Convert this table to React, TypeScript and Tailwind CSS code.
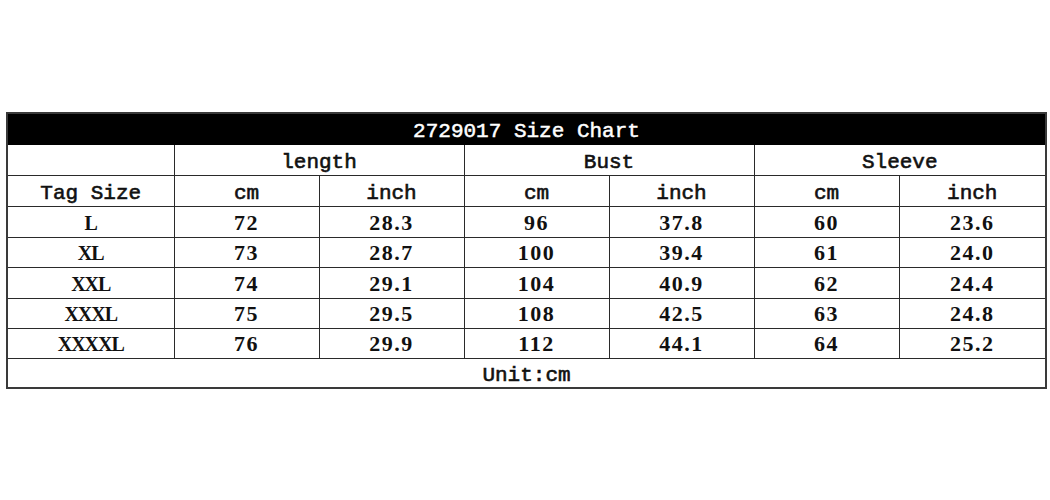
import React from "react";

const rows = [
  ["L", "72", "28.3", "96", "37.8", "60", "23.6"],
  ["XL", "73", "28.7", "100", "39.4", "61", "24.0"],
  ["XXL", "74", "29.1", "104", "40.9", "62", "24.4"],
  ["XXXL", "75", "29.5", "108", "42.5", "63", "24.8"],
  ["XXXXL", "76", "29.9", "112", "44.1", "64", "25.2"],
];
const heights = ["h-[31px]", "h-[30px]", "h-[31px]", "h-[30px]", "h-[30px]"];

const base = "border border-[#2a2a2a] text-center align-middle p-0 leading-none";
const cell = `${base} pt-[6px]`;
const mono = "font-['Liberation_Mono',monospace] font-normal [-webkit-text-stroke:0.6px_#111]";
const serif = `${base} pt-[2px] font-['Liberation_Serif',serif] font-bold text-[22px] tracking-[1.5px]`;
const tag = `${base} pt-[2px] font-['Liberation_Serif',serif] font-bold text-[20px] tracking-[-1px]`;

export default function App() {
  return (
    <div className="w-[1050px] h-[500px] bg-white pt-[112px] pl-[6px]">
      <table className="border-collapse table-fixed w-[1039px] text-[21px] text-[#111] border-2 border-[#3a3a3a]">
        <colgroup>
          <col className="w-[167px]" />
          <col className="w-[145px]" />
          <col className="w-[145px]" />
          <col className="w-[145px]" />
          <col className="w-[145px]" />
          <col className="w-[145px]" />
          <col className="w-[147px]" />
        </colgroup>
        <tbody>
          <tr className="h-[31px]">
            <td colSpan={7} className="bg-black text-white text-center align-middle p-0 pt-[6px] leading-none border border-black font-['Liberation_Mono',monospace] [-webkit-text-stroke:0.5px_#fff]">
              2729017 Size Chart
            </td>
          </tr>
          <tr className="h-[31px]">
            <td className={cell}></td>
            <td colSpan={2} className={`${cell} ${mono}`}>length</td>
            <td colSpan={2} className={`${cell} ${mono}`}>Bust</td>
            <td colSpan={2} className={`${cell} ${mono}`}>Sleeve</td>
          </tr>
          <tr className="h-[31px]">
            <td className={`${cell} ${mono}`}>Tag Size</td>
            <td className={`${cell} ${mono}`}>cm</td>
            <td className={`${cell} ${mono}`}>inch</td>
            <td className={`${cell} ${mono}`}>cm</td>
            <td className={`${cell} ${mono}`}>inch</td>
            <td className={`${cell} ${mono}`}>cm</td>
            <td className={`${cell} ${mono}`}>inch</td>
          </tr>
          {rows.map((r, i) => (
            <tr key={i} className={heights[i]}>
              {r.map((c, j) => (
                <td key={j} className={j === 0 ? tag : serif}>{c}</td>
              ))}
            </tr>
          ))}
          <tr className="h-[30px]">
            <td colSpan={7} className={`${cell} ${mono}`}>Unit:cm</td>
          </tr>
        </tbody>
      </table>
    </div>
  );
}
